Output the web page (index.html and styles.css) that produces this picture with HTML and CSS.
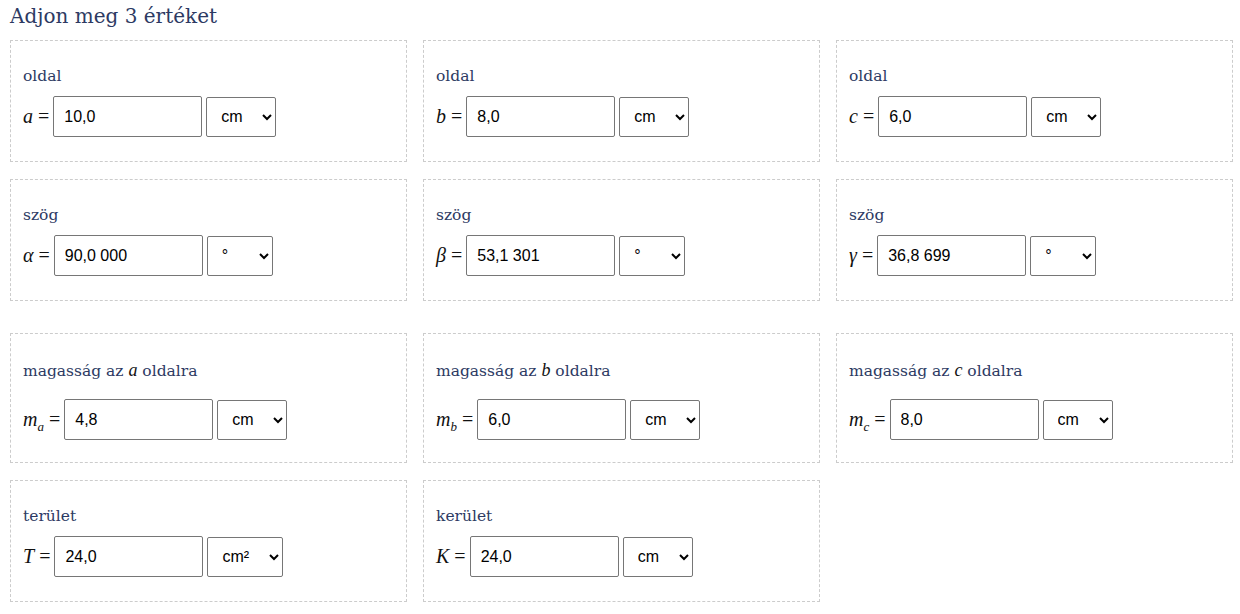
FILE: index.html
```html
<!DOCTYPE html>
<html lang="hu">
<head>
<meta charset="utf-8">
<title>Háromszög</title>
<link rel="stylesheet" href="styles.css">
</head>
<body>
<h2 class="title">Adjon meg 3 értéket</h2>
<div class="grid">
  <div class="box">
    <div class="lbl">oldal</div>
    <div class="row"><span class="var"><i>a</i> =</span><input class="num" value="10,0"><select class="unit u-cm"><option>cm</option></select></div>
  </div>
  <div class="box">
    <div class="lbl">oldal</div>
    <div class="row"><span class="var"><i>b</i> =</span><input class="num" value="8,0"><select class="unit u-cm"><option>cm</option></select></div>
  </div>
  <div class="box">
    <div class="lbl">oldal</div>
    <div class="row"><span class="var"><i>c</i> =</span><input class="num" value="6,0"><select class="unit u-cm"><option>cm</option></select></div>
  </div>
  <div class="box">
    <div class="lbl">szög</div>
    <div class="row"><span class="var"><i>α</i> =</span><input class="num" value="90,0 000"><select class="unit u-deg"><option>°</option></select></div>
  </div>
  <div class="box">
    <div class="lbl">szög</div>
    <div class="row"><span class="var"><i>β</i> =</span><input class="num" value="53,1 301"><select class="unit u-deg"><option>°</option></select></div>
  </div>
  <div class="box">
    <div class="lbl">szög</div>
    <div class="row"><span class="var"><i>γ</i> =</span><input class="num" value="36,8 699"><select class="unit u-deg"><option>°</option></select></div>
  </div>
</div>
<div class="grid second">
  <div class="box tall">
    <div class="lbl">magasság az <i class="mi">a</i> oldalra</div>
    <div class="row"><span class="var"><i>m</i><sub>a</sub> =</span><input class="num" value="4,8"><select class="unit u-cm"><option>cm</option></select></div>
  </div>
  <div class="box tall">
    <div class="lbl">magasság az <i class="mi">b</i> oldalra</div>
    <div class="row"><span class="var"><i>m</i><sub>b</sub> =</span><input class="num" value="6,0"><select class="unit u-cm"><option>cm</option></select></div>
  </div>
  <div class="box tall">
    <div class="lbl">magasság az <i class="mi">c</i> oldalra</div>
    <div class="row"><span class="var"><i>m</i><sub>c</sub> =</span><input class="num" value="8,0"><select class="unit u-cm"><option>cm</option></select></div>
  </div>
  <div class="box">
    <div class="lbl">terület</div>
    <div class="row"><span class="var"><i>T</i> =</span><input class="num" value="24,0"><select class="unit u-cm2"><option>cm²</option></select></div>
  </div>
  <div class="box">
    <div class="lbl">kerület</div>
    <div class="row"><span class="var"><i>K</i> =</span><input class="num" value="24,0"><select class="unit u-cm"><option>cm</option></select></div>
  </div>
</div>
</body>
</html>
```
FILE: styles.css
```css
html, body {
  margin: 0;
  background: #ffffff;
}
body {
  padding: 0 7px 0 10px;
  font-family: "DejaVu Serif", "Liberation Serif", serif;
  color: #2d3a63;
}
.title {
  margin: 0;
  height: 40px;
  font-family: "DejaVu Serif", serif;
  font-weight: normal;
  font-size: 20px;
  line-height: 33px;
  color: #2d3a63;
}
.grid {
  display: grid;
  grid-template-columns: repeat(3, 397px);
  column-gap: 16px;
  row-gap: 17px;
}
.grid.second {
  margin-top: 32px;
}
.box {
  border: 1px dashed #cccccc;
  padding: 23px 12px 24px;
  box-sizing: border-box;
  height: 122px;
}
.box.tall {
  height: 130px;
  padding-top: 24px;
}
.lbl {
  font-family: "DejaVu Serif", serif;
  font-size: 15.5px;
  line-height: 24px;
  margin-bottom: 8px;
  color: #2d3a63;
}
.tall .lbl {
  margin-bottom: 16px;
}
.mi {
  font-family: "Liberation Serif", serif;
  font-style: italic;
  font-size: 18px;
  color: #111;
}
.row {
  display: flex;
  align-items: center;
  gap: 4px;
  height: 41px;
}
.var {
  font-family: "Liberation Serif", serif;
  font-size: 20px;
  color: #111;
  white-space: nowrap;
}
.var i {
  font-style: italic;
}
.var sub {
  font-size: 13px;
  font-style: italic;
  vertical-align: -5px;
  line-height: 0;
}
.num {
  width: 149px;
  height: 41px;
  box-sizing: border-box;
  border: 1px solid #767676;
  border-radius: 2px;
  padding: 0 10px;
  font-family: "Liberation Sans", Arial, sans-serif;
  font-size: 16px;
  color: #000;
  background: #fff;
}
.unit {
  height: 40px;
  box-sizing: border-box;
  border: 1px solid #767676;
  border-radius: 2px;
  padding: 0 6px 0 10px;
  font-family: "Liberation Sans", Arial, sans-serif;
  font-size: 16px;
  color: #000;
  background: #fff;
}
.u-cm { width: 70px; }
.u-deg { width: 66px; }
.u-cm2 { width: 76px; }
```
